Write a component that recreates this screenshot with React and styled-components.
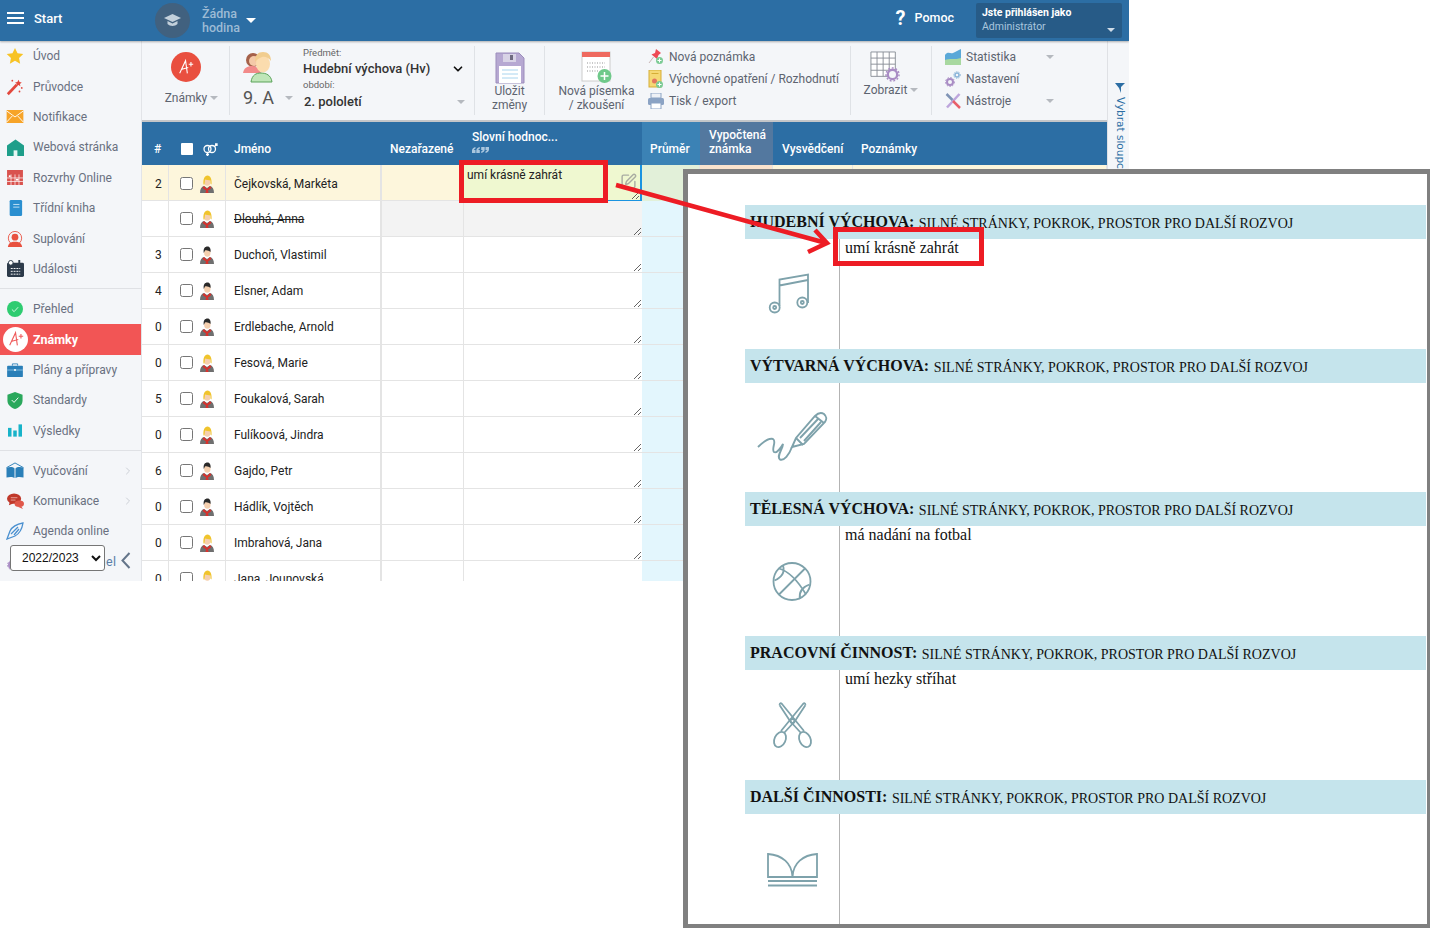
import React from 'react'
import styled, { createGlobalStyle } from 'styled-components'
import { SquarePen, ChevronDown, ChevronRight } from 'lucide-react'

const GlobalStyle = createGlobalStyle`
  html, body { margin: 0; padding: 0; background: #fff; }
  body { font-family: Roboto, "Liberation Sans", Arial, sans-serif; font-size: 12px; color: #222; }
  * { box-sizing: border-box; }
`

const BLUE = '#2c6ea4'

const Page = styled.div`
  position: relative;
  width: 1430px;
  height: 928px;
  overflow: hidden;
`

const Shell = styled.div`
  width: 1129px;
  height: 581px;
  display: flex;
  flex-direction: column;
  overflow: hidden;
`

/* top bar */
const TopBar = styled.header`
  height: 41px;
  flex: none;
  background: ${BLUE};
  display: flex;
  align-items: center;
  color: #fff;
  box-shadow: 0 1px 2px rgba(0, 0, 0, 0.3);
  position: relative;
  z-index: 2;
`

const Burger = styled.div`
  width: 17px;
  height: 12px;
  margin: -5px 0 0 7px;
  border-top: 2px solid #fff;
  border-bottom: 2px solid #fff;
  position: relative;
  &::after {
    content: '';
    position: absolute;
    left: 0;
    right: 0;
    top: 3px;
    height: 2px;
    background: #fff;
  }
`

const StartLabel = styled.span`
  margin: -5px 0 0 10px;
  width: 121px;
  font-size: 13px;
  font-weight: 500;
`

const LessonCircle = styled.div`
  width: 35px;
  height: 35px;
  border-radius: 50%;
  background: #41617f;
  display: flex;
  align-items: center;
  justify-content: center;
`

const LessonText = styled.div`
  margin-left: 12px;
  width: 44px;
  font-size: 12.5px;
  line-height: 14px;
  font-weight: 500;
  color: #9dbbd5;
`

const Caret = styled.i`
  display: inline-block;
  width: 0;
  height: 0;
  border-left: ${p => p.$size || 4}px solid transparent;
  border-right: ${p => p.$size || 4}px solid transparent;
  border-top: ${p => p.$size || 4}px solid ${p => p.$color || '#b5b9bf'};
  flex: none;
`

const HelpMark = styled.span`
  margin: -5px 0 0 auto;
  font-size: 20px;
  font-weight: 700;
`

const HelpLabel = styled.span`
  margin: -7px 0 0 9px;
  font-size: 12.5px;
  font-weight: 500;
`

const UserBox = styled.div`
  margin: 0 7px 0 22px;
  width: 146px;
  height: 35px;
  background: #275b87;
  border-radius: 2px;
  padding: 3px 6px;
  position: relative;
  font-size: 10.5px;
  line-height: 14px;
  span { display: block; }
  b { font-weight: 700; font-size: 10.5px; }
  span + span { color: #a9c6de; }
  ${Caret} { position: absolute; right: 7px; bottom: 6px; }
`

const Body = styled.div`
  flex: 1;
  min-height: 0;
  display: flex;
`

/* sidebar */
const Sidebar = styled.nav`
  width: 142px;
  flex: none;
  background: #f4f6f9;
  border-right: 1px solid #e2e4e8;
  position: relative;
`

const NavItem = styled.div`
  height: ${p => (p.$active ? 31 : 30.4)}px;
  display: flex;
  align-items: center;
  padding-left: ${p => (p.$active ? 3 : 6)}px;
  gap: ${p => (p.$active ? 5 : 9)}px;
  color: ${p => (p.$active ? '#fff' : '#697080')};
  background: ${p => (p.$active ? '#f25555' : 'transparent')};
  font-weight: ${p => (p.$active ? 700 : 400)};
  font-size: ${p => (p.$active ? 12.5 : 12)}px;
  position: relative;
  svg.side { position: absolute; right: 7px; color: #ccd0d6; }
`

const NavIcon = styled.span`
  width: 18px;
  flex: none;
  display: flex;
  justify-content: center;
`

const Divider = styled.div`
  height: 1px;
  background: #dfe1e5;
  margin: 4px 0 4.4px;
`

const ActiveBadge = styled.span`
  width: 25px;
  height: 25px;
  border-radius: 50%;
  background: #fff;
  display: flex;
  align-items: center;
  justify-content: center;
`

const YearSelect = styled.select`
  position: absolute;
  left: 10px;
  top: 504px;
  width: 95px;
  height: 26px;
  font-family: "Liberation Sans", Arial, sans-serif;
  font-size: 12px;
  background: #fff;
  color: #111;
  border: 1px solid #767676;
  border-radius: 3px;
  padding-left: 7px;
`

const Collapse = styled.svg`
  position: absolute;
  left: 121px;
  top: 511px;
`

const PanelLabel = styled.span`
  color: #5a7fa8;
  font-size: 12.5px;
  letter-spacing: 0.4px;
`

/* main */
const Main = styled.main`
  width: 965px;
  flex: none;
  display: flex;
  flex-direction: column;
  min-height: 0;
`

const Toolbar = styled.div`
  height: 81px;
  flex: none;
  background: #f4f6f9;
  border-bottom: 2px solid #c4c6c9;
  display: flex;
  padding: 5px 0;
`

const Group = styled.div`
  width: ${p => p.$w}px;
  flex: none;
  border-right: ${p => (p.$last ? 'none' : '1px solid #dfe2e6')};
  display: flex;
  position: relative;
  color: #5d6470;
  font-size: 12px;
`

const BigAction = styled.div`
  flex: ${p => (p.$fixed ? 'none' : 1)};
  width: ${p => (p.$fixed ? `${p.$fixed}px` : 'auto')};
  display: flex;
  flex-direction: column;
  align-items: center;
  padding-top: ${p => p.$top || 5}px;
  line-height: 14px;
  text-align: center;
  gap: ${p => p.$gap ?? 1}px;
`

const ArtShift = styled.span`
  display: block;
  line-height: 0;
  margin-right: ${p => p.$right}px;
`

const CaretLine = styled.span`
  display: flex;
  align-items: center;
  gap: 3px;
  margin-left: ${p => p.$left || 0}px;
`

const GradeCircle = styled.span`
  width: 30px;
  height: 30px;
  border-radius: 50%;
  background: #e94f3f;
  display: flex;
  align-items: center;
  justify-content: center;
  margin-bottom: 8px;
`

const ClassBlock = styled.div`
  width: 73px;
  padding: 3px 0 0 13px;
  display: flex;
  flex-direction: column;
`

const ClassName = styled.span`
  font-size: 18px;
  line-height: 20px;
  color: #555;
  margin-top: 5px;
  display: flex;
  align-items: center;
  gap: 11px;
`

const SubjectBlock = styled.div`
  width: 164px;
  padding-top: 1px;
  display: flex;
  flex-direction: column;
`

const FieldLabel = styled.span`
  font-size: 9.5px;
  line-height: 12px;
  color: #666;
`

const FieldValue = styled.span`
  font-size: 13px;
  font-weight: 500;
  color: #333;
  line-height: 19px;
  display: flex;
  align-items: center;
  justify-content: space-between;
  padding-right: 2px;
  margin: ${p => (p.$low ? '1px 0 0 1px' : '0 0 1px')};
`

const LinkList = styled.div`
  display: flex;
  flex-direction: column;
  width: ${p => p.$w || 'auto'};
  padding: 0 0 0 ${p => p.$left || 0}px;
`

const LinkRow = styled.div`
  height: 22px;
  display: flex;
  align-items: center;
  gap: 5px;
  ${Caret} { margin-left: auto; margin-right: 5px; }
`

/* table */
const Columns = '27px 57px 156px 82px 178px 58px 73px 80px 1fr'

const Grid = styled.div`
  flex: 1;
  min-height: 0;
  overflow: hidden;
`

const HeadRow = styled.div`
  display: grid;
  grid-template-columns: ${Columns};
  height: 43px;
  background: ${BLUE};
  color: #fff;
  font-weight: 500;
`

const HeadCell = styled.div`
  display: flex;
  align-items: ${p => (p.$stack ? 'flex-start' : 'flex-end')};
  flex-direction: ${p => (p.$stack ? 'column' : 'row')};
  justify-content: ${p => (p.$stack ? 'flex-end' : 'flex-start')};
  gap: ${p => (p.$stack ? 3 : 5)}px;
  padding: 0 0 ${p => p.$bottom || 9}px ${p => p.$pad ?? 8}px;
  background: ${p => p.$bg || 'transparent'};
  line-height: 14px;
`

const HeadBox = styled.input`
  appearance: none;
  margin: 0 0 1px 12px;
  width: 12px;
  height: 12px;
  background: #fff;
  border-radius: 1px;
`

const GenderMark = styled.svg`
  margin-left: 5px;
  flex: none;
`

const StudentRow = styled.div`
  display: grid;
  grid-template-columns: ${Columns};
  height: 36px;
  background: ${p => (p.$current ? '#fdf6dc' : '#fff')};
  border-bottom: 1px solid #e4e4e4;
`

const Cell = styled.div`
  display: flex;
  align-items: center;
  border-right: ${p => p.$border || '1px solid #e4e4e4'};
  padding-left: ${p => p.$pad || 0}px;
  justify-content: ${p => (p.$center ? 'center' : 'flex-start')};
  background: ${p => p.$bg || 'transparent'};
  text-decoration: ${p => (p.$strike ? 'line-through' : 'none')};
  gap: ${p => p.$gap || 0}px;
  position: relative;
  min-width: 0;
`

const RowCheck = styled.input`
  margin: 0 0 0 11px;
  width: 13px;
  height: 13px;
`

const NoteCell = styled(Cell)`
  border-right: none;
  align-items: flex-start;
  z-index: 1;
`

const NoteArea = styled.textarea`
  width: ${p => (p.$current ? 'calc(100% + 2px)' : '100%')};
  height: ${p => (p.$current ? 37 : 35)}px;
  display: block;
  margin: 0;
  padding: 3px;
  font: 12px/14px Roboto, "Liberation Sans", Arial, sans-serif;
  color: #222;
  border: ${p => (p.$current ? '1px solid #1a93e0' : 'none')};
  border-width: ${p => (p.$current ? '0 2px 2px 0' : '0')};
  background: ${p => (p.$current ? '#eff8d0' : p.$empty ? '#f3f3f3' : '#fff')};
  outline: none;
  resize: vertical;
`

const EditIcon = styled.span`
  position: absolute;
  right: 5px;
  top: 8px;
  color: #a9aca2;
  line-height: 0;
`

const Strip = styled.aside`
  flex: 1;
  background: #f4f6f9;
  border-left: 1px solid #dfe1e5;
  padding: 42px 0 0 7px;
  color: ${BLUE};
  font-family: "DejaVu Sans", sans-serif;
  font-size: 10.5px;
  position: relative;
  z-index: 1;
`

const StripText = styled.div`
  writing-mode: vertical-rl;
  white-space: nowrap;
  margin-top: 2px;
`

/* report overlay */
const Report = styled.section`
  position: absolute;
  left: 683px;
  top: 169px;
  width: 747px;
  height: 759px;
  background: #fff;
  border: solid #808080;
  border-width: 5px 3px 4px 5px;
  padding: 31px 1px 0 57px;
  font-family: "Liberation Serif", "Times New Roman", serif;
  display: flex;
  flex-direction: column;
  color: #111;
  z-index: 3;
`

const SectionHead = styled.div`
  height: 34px;
  flex: none;
  background: #c5e4ec;
  padding: 1px 0 0 5px;
  line-height: 33px;
  font-size: 14px;
  white-space: nowrap;
  b { font-size: 16px; margin-right: 1px; position: relative; top: -1px; }
`

const SectionBody = styled.div`
  height: ${p => (p.$fill ? 'auto' : '109.7px')};
  flex: ${p => (p.$fill ? 1 : 'none')};
  display: grid;
  grid-template-columns: 94px 1fr;
`

const IconCell = styled.div`
  display: flex;
  align-items: center;
  justify-content: center;
`

const TextCell = styled.div`
  border-left: 1px solid #b3b3b3;
  padding: 0 0 0 5px;
  font-size: 16px;
  line-height: 18px;
`

const Callouts = styled.svg`
  position: absolute;
  left: 0;
  top: 0;
  z-index: 4;
  pointer-events: none;
`

/* icons */
const Star = () => (
  <svg width="18" height="18" viewBox="0 0 20 20"><path d="M10 1l2.800 5.900 6.400.8-4.700 4.400 1.200 6.400L10 15.400l-5.700 3.100 1.200-6.400L.8 7.700l6.400-.8z" fill="#f7c325" /></svg>
)
const Wand = () => (
  <svg width="18" height="18" viewBox="0 0 20 20"><path d="M2 18L12 7.500" stroke="#e2483d" strokeWidth="3" /><path d="M14 2l1 2.500 2.500.5-2 1.700.5 2.500-2.200-1.300-2.200 1.300.5-2.500-2-1.700 2.500-.5z" fill="#e2483d" /><circle cx="17.500" cy="11" r="1" fill="#e2483d" /><circle cx="7" cy="3" r="1" fill="#e2483d" /><circle cx="15" cy="15" r="1" fill="#e2483d" /></svg>
)
const Mail = () => (
  <svg width="18" height="13" viewBox="0 0 18 14"><rect width="18" height="14" fill="#f7a429" /><path d="M0 1l9 6.500L18 1M0 13l6-6.500M18 13l-6-6.500" stroke="#fff" strokeWidth="1" fill="none" /></svg>
)
const House = () => (
  <svg width="17" height="17" viewBox="0 0 18 18"><path d="M0 7l9-6.500L18 7v11H0z" fill="#1e9e8a" /><path d="M7 18v-6h4v6" fill="#e6f6f3" /></svg>
)
const Timetable = () => (
  <svg width="16" height="15" viewBox="0 0 18 17"><rect width="18" height="17" fill="#d9534f" /><path d="M4.500 5v12M9 5v12M13.500 5v12M0 9h18M0 13h18" stroke="#fff" strokeWidth=".8" /><rect x="2" y="6" width="2" height="2" fill="#fff" /><rect x="10" y="10" width="3" height="2" fill="#fff" /></svg>
)
const Notebook = () => (
  <svg width="16" height="16" viewBox="0 0 18 18"><rect x="3" y="0" width="14" height="18" rx="1.500" fill="#2a8fd0" /><path d="M7 5h7M7 8h7" stroke="#cfe9f8" /></svg>
)
const Substitute = () => (
  <svg width="16" height="16" viewBox="0 0 18 18"><circle cx="9" cy="8" r="7.500" fill="none" stroke="#e8503f" /><circle cx="9" cy="7" r="3.800" fill="#e8503f" /><path d="M1 18c.5-4 3-6 8-6s7.500 2 8 6z" fill="#e8503f" /></svg>
)
const CalendarDark = () => (
  <svg width="17" height="17" viewBox="0 0 18 18"><rect x="0" y="3" width="18" height="15" rx="1.500" fill="#2c3a4a" /><path d="M4 9h10M4 12h10M4 15h10" stroke="#fff" strokeDasharray="2 1" /><circle cx="4" cy="3" r="2.500" fill="#fff" stroke="#2c3a4a" /><path d="M13 0v4" stroke="#2c3a4a" strokeWidth="2" /></svg>
)
const CheckRound = () => (
  <svg width="16" height="16" viewBox="0 0 18 18"><circle cx="9" cy="9" r="9" fill="#2ecc71" /><path d="M5.500 9.500l2.500 2.500 4.500-5" stroke="#e6fbef" fill="none" /></svg>
)
const GradeMark = ({ color }) => (
  <svg width="18" height="18" viewBox="0 0 20 20" fill="none" stroke={color} strokeWidth="1.200"><path d="M3 17L9.500 3l2 14M5.500 12.500l7-2" /><path d="M15.500 4.500v5M13 7h5" /></svg>
)
const Briefcase = () => (
  <svg width="16" height="14" viewBox="0 0 18 16"><path d="M6 3V1h6v2" fill="none" stroke="#2a7fb8" /><rect y="3" width="18" height="13" rx="1" fill="#2a7fb8" /><path d="M0 8h18" stroke="#8cc3e6" /><rect x="8" y="7" width="2" height="2" fill="#fff" /></svg>
)
const Shield = () => (
  <svg width="16" height="17" viewBox="0 0 16 18"><path d="M8 0l8 3v6c0 4.500-3.500 7.500-8 9-4.500-1.500-8-4.500-8-9V3z" fill="#2aa85c" /><path d="M4.500 8.500l2.500 2.500 4.500-5" stroke="#fff" fill="none" /></svg>
)
const Bars = () => (
  <svg width="14" height="13" viewBox="0 0 16 14"><rect y="4" width="4" height="10" fill="#17b3c9" /><rect x="6" y="7" width="4" height="7" fill="#17b3c9" /><rect x="12" width="4" height="14" fill="#17b3c9" /></svg>
)
const BookBlue = () => (
  <svg width="18" height="17" viewBox="0 0 18 18"><path d="M0 6l9-5 9 5" stroke="#2a7fb8" fill="none" /><path d="M0 6c3-1 7-1 8.500 1v10C7 15.500 3 15.500 0 16.500zM18 6c-3-1-7-1-8.500 1v10c1.500-1.500 5.500-1.500 8.500-.5z" fill="#2a7fb8" /></svg>
)
const Chat = () => (
  <svg width="17" height="16" viewBox="0 0 18 17"><ellipse cx="7.500" cy="6" rx="7.500" ry="5.500" fill="#c0392b" /><path d="M3 9l-1 4 5-2z" fill="#c0392b" /><path d="M4 5h7M4 7.500h5" stroke="#e8a49c" /><ellipse cx="13" cy="11.500" rx="5" ry="3.500" fill="#e0574a" /><path d="M15 14l2 3-5-2z" fill="#e0574a" /></svg>
)
const Feather = () => (
  <svg width="18" height="18" viewBox="0 0 18 18" fill="none" stroke="#4a90d0" strokeWidth="1.300"><path d="M1 17L4 9c2-4 7-7 13-8-1 6-4 11-8 13z" /><path d="M5 12l7-7M8 13l5-6" /></svg>
)
const Hat = ({ color = '#c3d0db' }) => (
  <svg width="17" height="15" viewBox="0 0 17 15"><path d="M8.500 1L17 5l-8.500 4L0 5z" fill={color} /><path d="M3.500 8v3c2.500 2.500 7.500 2.500 10 0V8l-5 2.500z" fill={color} /></svg>
)
const Quotes = () => (
  <svg width="17" height="6" viewBox="0 0 17 6" fill="#a9c6de"><path d="M0 3.500C0 1.500 1.500.5 3.500 0v1.500C2.500 2 2 2.500 2 3h1.500v3H0zM4.300 3.500C4.300 1.500 5.800.5 7.800 0v1.500C6.800 2 6.300 2.500 6.300 3h1.500v3H4.300zM9.200 0h3.500v2.500c0 2-1.500 3-3.500 3.500V4.500c1-.5 1.500-1 1.500-1.500H9.200zM13.500 0H17v2.500c0 2-1.500 3-3.500 3.500V4.500c1-.5 1.500-1 1.500-1.500h-1.500z" /></svg>
)
const Avatar = ({ female }) => (
  <svg width="14" height="18" viewBox="0 0 14 18">
    <path d="M0 18c0-4 1.500-6.500 4-7l3 2 3-2c2.500.5 4 3 4 7z" fill="#6f6f6f" />
    <ellipse cx="7.300" cy="6.500" rx="3.200" ry="4.300" fill="#f5cfae" />
    <path d="M4 11l3 3 3-3 1.500 2L8 15.500l.5 2.500h-3l.5-2.500L2.500 13z" fill="#d8322d" />
    {female
      ? <path d="M3.500 9.500C3 4 4.500.5 7.500.5S12 4 11.500 9.500l-1-1V5.500C9 5 6 5 5 4.500L4.500 9.500z" fill="#f0c42c" />
      : <path d="M3.800 7C3 2.500 5 .5 7.500.5S11 3 10.500 6C9 5 7 4 5 4.500z" fill="#2a2a2a" />}
  </svg>
)
const Parents = () => (
  <svg width="36" height="34" viewBox="0 0 36 34">
    <circle cx="10" cy="11" r="7" fill="#a5614a" />
    <path d="M0 24c1-5 4-7 9-7s8 3 9 7z" fill="#f28a8a" />
    <circle cx="11" cy="12" r="5" fill="#f4c9a8" />
    <path d="M8 33c1-7 5-9 10-9s10 2 11 9z" fill="#bfe6b8" stroke="#5aa35a" />
    <ellipse cx="20" cy="15" rx="7" ry="8.500" fill="#fbdcae" />
    <path d="M12 13c0-7 3-10 8-10s8 3 8 9c-2-3-6-5-9-4-2 1-5 2-7 5z" fill="#f1cd8f" />
  </svg>
)
const SaveDisk = () => (
  <svg width="30" height="32" viewBox="0 0 30 32">
    <path d="M1 1h23l5 5v25H1z" fill="#b6a8d2" stroke="#9c8dbc" />
    <rect x="8" y="2" width="13" height="8" fill="#d8d3e6" /><rect x="15" y="3" width="3" height="5" fill="#6f6a80" />
    <rect x="4" y="14" width="22" height="17" fill="#fff" />
    <path d="M7 18h16M7 22h16M7 26h16" stroke="#a9d4ee" />
  </svg>
)
const ExamPage = () => (
  <svg width="32" height="33" viewBox="0 0 32 33">
    <rect x="1" y="1" width="28" height="29" fill="#fff" stroke="#ccc" />
    <rect x="1" y="1" width="28" height="5" fill="#ef6a5f" />
    <path d="M6 12h18M6 16h18M6 20h12" stroke="#c9c9c9" strokeDasharray="1 1.500" strokeWidth="2" />
    <circle cx="23.500" cy="25" r="7" fill="#6fc98a" />
    <path d="M23.500 21v8M19.500 25h8" stroke="#fff" strokeWidth="1.500" />
  </svg>
)
const Pin = () => (
  <svg width="16" height="18" viewBox="0 0 16 18"><path d="M8 1l5 4-2.500 2L9 11 3.500 6.500 7 5z" fill="#ee4a55" /><path d="M5.500 9L1 15" stroke="#c9b7b7" /><circle cx="11.500" cy="12.500" r="3.500" fill="#7ccb95" /><path d="M11.500 10.500v4M9.500 12.500h4" stroke="#fff" /></svg>
)
const Measure = () => (
  <svg width="16" height="19" viewBox="0 0 16 19"><rect x="1" y="0" width="12" height="17" fill="#f5d874" stroke="#d6ad36" /><path d="M3.500 3.500h7" stroke="#d6ad36" /><circle cx="6.500" cy="11" r="2.500" fill="#e2755f" /><circle cx="11.500" cy="14.500" r="3.500" fill="#7ccb95" /><path d="M11.500 12.500v4M9.500 14.500h4" stroke="#fff" /></svg>
)
const Printer = () => (
  <svg width="16" height="16" viewBox="0 0 16 16"><rect x="3" y="0" width="10" height="5" fill="#eef1f6" stroke="#8ba3c4" /><rect y="5" width="16" height="7" rx="1.500" fill="#8ba3c4" /><rect x="3" y="10" width="10" height="6" fill="#fff" stroke="#8ba3c4" /></svg>
)
const GridGear = () => (
  <svg width="30" height="31" viewBox="0 0 32 33">
    <path d="M1 1h26v26H1zM1 7.500h26M1 14h26M1 20.500h26M7.500 1v26M14 1v26M20.500 1v26" fill="#fff" stroke="#8a8f98" />
    <circle cx="24" cy="25" r="5" fill="#f4f6f9" stroke="#a98cc4" strokeWidth="2.500" />
    <circle cx="24" cy="25" r="7" fill="none" stroke="#a98cc4" strokeWidth="1.500" strokeDasharray="2 2" />
  </svg>
)
const AreaChart = () => (
  <svg width="16" height="16" viewBox="0 0 16 16"><path d="M0 16V6c3-4 5-1 8-2s5-3 8-4v16z" fill="#5aa8d8" /><path d="M0 16v-5c4-2 10 0 16-2v7z" fill="#a8d8a0" /></svg>
)
const Gears = () => (
  <svg width="16" height="16" viewBox="0 0 16 16" fill="none"><circle cx="5" cy="11" r="3" stroke="#a98cc4" strokeWidth="2" /><circle cx="5" cy="11" r="4.500" stroke="#a98cc4" strokeDasharray="1.500 1.500" /><circle cx="12" cy="4" r="2" stroke="#8ab4d8" strokeWidth="1.500" /><circle cx="12" cy="4" r="3.300" stroke="#8ab4d8" strokeDasharray="1.200 1.200" /></svg>
)
const Tools = () => (
  <svg width="16" height="16" viewBox="0 0 16 16" strokeWidth="2.500" fill="none"><path d="M14.500 1L2 14.500" stroke="#bda5dc" /><path d="M1.500 1l6 6" stroke="#7f93b5" /><path d="M8 8l7 7" stroke="#e8606a" /></svg>
)

const sk = { width: 55, fill: 'none', stroke: '#7ea2ab', strokeWidth: 1.800 }

const MusicArt = () => (
  <svg height="55" viewBox="0 0 55 55" {...sk}>
    <path d="M14.500 40V13.500L43 8.500V37M14.500 19.500L43 14" />
    <circle cx="9.700" cy="41.500" r="5" /><circle cx="9.700" cy="41.500" r="1.500" />
    <circle cx="37.300" cy="36.500" r="5" /><circle cx="37.300" cy="36.500" r="1.500" />
  </svg>
)
const PencilArt = () => (
  <svg width="85" height="65" viewBox="0 0 85 65" fill="none" stroke="#7ea2ab" strokeWidth="1.900">
    <path d="M8 42C13 37 19 33 23 34C27 36 21 44 24 47C27 49 32 41 33 39C33 44 26 51 30 54.500C34 56 39 50 42 42" />
    <path d="M42 42L46 33L65 11C68 8 71 7 74 9C77 12 77 14 75 17L54 39Z" />
    <path d="M46 33L53 40M50 33L68 14M54 36L71 17M65 11L74 18" />
  </svg>
)
const BallArt = () => (
  <svg height="55" viewBox="0 0 55 52" {...sk}>
    <circle cx="27" cy="26" r="18.500" />
    <path d="M18 10Q21 20 9.500 25M44.500 29Q33 33 35 43.500M14 13Q28 17 41 39M40 13L14 39" />
  </svg>
)
const ScissorsArt = () => (
  <svg height="55" viewBox="0 0 55 55" {...sk}>
    <path d="M14.500 8Q15 5 17 7L39 34M14.500 8L25 24L36 36" />
    <path d="M40.500 8Q40 5 38 7L16 34M40.500 8L30 24L19 36" />
    <ellipse cx="40" cy="42.500" rx="5.500" ry="8" transform="rotate(-25 40 42.500)" />
    <ellipse cx="15" cy="42.500" rx="5.500" ry="8" transform="rotate(25 15 42.500)" />
    <circle cx="27.500" cy="24" r="2" />
  </svg>
)
const BookArt = () => (
  <svg height="55" viewBox="0 0 55 55" {...sk}>
    <path d="M3 13V36H52V13C38 14 28 22 27.500 36C27 22 17 14 3 13Z" />
    <path d="M3 40H52M3 44.500H52" strokeWidth="2" />
  </svg>
)

const menuTop = [
  [Star, 'Úvod'], [Wand, 'Průvodce'], [Mail, 'Notifikace'], [House, 'Webová stránka'],
  [Timetable, 'Rozvrhy Online'], [Notebook, 'Třídní kniha'], [Substitute, 'Suplování'], [CalendarDark, 'Události'],
]
const menuBottom = [[Briefcase, 'Plány a přípravy'], [Shield, 'Standardy'], [Bars, 'Výsledky']]

const students = [
  ['2', 'Čejkovská, Markéta', true],
  ['', 'Dlouhá, Anna', true],
  ['3', 'Duchoň, Vlastimil', false],
  ['4', 'Elsner, Adam', false],
  ['0', 'Erdlebache, Arnold', false],
  ['0', 'Fesová, Marie', true],
  ['5', 'Foukalová, Sarah', true],
  ['0', 'Fulíkoová, Jindra', true],
  ['6', 'Gajdo, Petr', false],
  ['0', 'Hádlík, Vojtěch', false],
  ['0', 'Imbrahová, Jana', true],
  ['0', 'Jana, Jounovská', true],
]

const sections = [
  ['HUDEBNÍ VÝCHOVA:', 'umí krásně zahrát', MusicArt],
  ['VÝTVARNÁ VÝCHOVA:', '', PencilArt],
  ['TĚLESNÁ VÝCHOVA:', 'má nadání na fotbal', BallArt],
  ['PRACOVNÍ ČINNOST:', 'umí hezky stříhat', ScissorsArt],
  ['DALŠÍ ČINNOSTI:', '', BookArt],
]

const NavRow = ({ icon: Icon, label, more }) => (
  <NavItem>
    <NavIcon><Icon /></NavIcon>
    <span>{label}</span>
    {more && <ChevronRight className="side" size={12} />}
  </NavItem>
)

const App = () => (
  <Page>
    <GlobalStyle />
    <Shell>
      <TopBar>
        <Burger />
        <StartLabel>Start</StartLabel>
        <LessonCircle><Hat /></LessonCircle>
        <LessonText>Žádna hodina</LessonText>
        <Caret $size={5} $color="#fff" />
        <HelpMark>?</HelpMark>
        <HelpLabel>Pomoc</HelpLabel>
        <UserBox>
          <span><b>Jste přihlášen jako</b></span>
          <span>Administrátor</span>
          <Caret $color="#cfdce8" />
        </UserBox>
      </TopBar>
      <Body>
        <Sidebar>
          {menuTop.map(([icon, label]) => <NavRow key={label} icon={icon} label={label} />)}
          <Divider />
          <NavRow icon={CheckRound} label="Přehled" />
          <NavItem $active>
            <ActiveBadge><GradeMark color="#ef5a5a" /></ActiveBadge>
            <span>Známky</span>
          </NavItem>
          {menuBottom.map(([icon, label]) => <NavRow key={label} icon={icon} label={label} />)}
          <Divider />
          <NavRow icon={BookBlue} label="Vyučování" more />
          <NavRow icon={Chat} label="Komunikace" more />
          <NavRow icon={Feather} label="Agenda online" />
          <NavItem><NavIcon><Gears /></NavIcon><PanelLabel>Schovat panel</PanelLabel></NavItem>
          <YearSelect defaultValue="2022/2023"><option>2022/2023</option></YearSelect>
          <Collapse width="10" height="17" viewBox="0 0 10 17" fill="none" stroke="#64758a" strokeWidth="2"><path d="M8.500 1L1.500 8.500l7 7.500" /></Collapse>
        </Sidebar>
        <Main>
          <Toolbar>
            <Group $w={88}>
              <BigAction $top={6}>
                <GradeCircle><GradeMark color="#fff" /></GradeCircle>
                <CaretLine $left={12}>Známky <Caret /></CaretLine>
              </BigAction>
            </Group>
            <Group $w={245}>
              <ClassBlock>
                <Parents />
                <ClassName>9. A <Caret /></ClassName>
              </ClassBlock>
              <SubjectBlock>
                <FieldLabel>Předmět:</FieldLabel>
                <FieldValue>Hudební výchova (Hv) <ChevronDown size={14} color="#111" strokeWidth={3} /></FieldValue>
                <FieldLabel>období:</FieldLabel>
                <FieldValue $low>2. pololetí <Caret /></FieldValue>
              </SubjectBlock>
            </Group>
            <Group $w={70}>
              <BigAction $top={6} $gap={0}>
                <SaveDisk />
                <span>Uložit<br />změny</span>
              </BigAction>
            </Group>
            <Group $w={306}>
              <BigAction $fixed={103} $top={5} $gap={0}>
                <ExamPage />
                <span>Nová písemka<br />/ zkoušení</span>
              </BigAction>
              <LinkList>
                <LinkRow><Pin /> Nová poznámka</LinkRow>
                <LinkRow><Measure /> Výchovné opatření / Rozhodnutí</LinkRow>
                <LinkRow><Printer /> Tisk / export</LinkRow>
              </LinkList>
            </Group>
            <Group $w={81}>
              <BigAction $top={5}>
                <ArtShift $right={12}><GridGear /></ArtShift>
                <CaretLine>Zobrazit <Caret /></CaretLine>
              </BigAction>
            </Group>
            <Group $w={175} $last>
              <LinkList $left={13} $w="127px">
                <LinkRow><AreaChart /> Statistika <Caret /></LinkRow>
                <LinkRow><Gears /> Nastavení</LinkRow>
                <LinkRow><Tools /> Nástroje <Caret /></LinkRow>
              </LinkList>
            </Group>
          </Toolbar>
          <Grid>
            <HeadRow>
              <HeadCell $pad={12}>#</HeadCell>
              <HeadCell $pad={0}>
                <HeadBox type="checkbox" />
                <GenderMark width="15" height="13" viewBox="0 0 15 13" fill="none" stroke="#fff" strokeWidth="1.300"><circle cx="4.500" cy="6" r="3.500" /><circle cx="9" cy="6" r="3.500" /><path d="M4.500 9.500V13M3 11.500h3M11.500 3.500L14 1M12 1h2v2" /></GenderMark>
              </HeadCell>
              <HeadCell>Jméno</HeadCell>
              <HeadCell>Nezařazené</HeadCell>
              <HeadCell $stack $bottom={12}>Slovní hodnoc...<Quotes /></HeadCell>
              <HeadCell $bg="#3b82b5">Průměr</HeadCell>
              <HeadCell $bg="#53789f" $pad={9} $bottom={9}>Vypočtená<br />známka</HeadCell>
              <HeadCell $pad={9}>Vysvědčení</HeadCell>
              <HeadCell>Poznámky</HeadCell>
            </HeadRow>
            {students.map(([no, name, female], i) => {
              const current = i === 0
              const removed = i === 1
              return (
                <StudentRow key={name} $current={current}>
                  <Cell $pad={13}>{no}</Cell>
                  <Cell $gap={7}><RowCheck type="checkbox" /><Avatar female={female} /></Cell>
                  <Cell $pad={8} $strike={removed} $border="2px solid #e4e4e4">{name}</Cell>
                  <Cell $bg={removed ? '#f3f3f3' : undefined} />
                  <NoteCell>
                    <NoteArea readOnly $current={current} $empty={removed} defaultValue={current ? 'umí krásně zahrát' : ''} />
                    {current && <EditIcon><SquarePen size={17} /></EditIcon>}
                  </NoteCell>
                  <Cell $bg={current ? '#e2f0d9' : '#e3f6fd'} />
                  <Cell $bg={current ? '#fbe3cd' : '#fff'} />
                  <Cell />
                  <Cell />
                </StudentRow>
              )
            })}
          </Grid>
        </Main>
        <Strip>
          <svg width="10" height="10" viewBox="0 0 10 10"><path d="M0 0h10L6 4v6L4 5z" fill={BLUE} /></svg>
          <StripText>Vybrat sloupce</StripText>
        </Strip>
      </Body>
    </Shell>

    <Report>
      {sections.map(([title, text, Art], i) => (
        <React.Fragment key={title}>
          <SectionHead><b>{title}</b> SILNÉ STRÁNKY, POKROK, PROSTOR PRO DALŠÍ ROZVOJ</SectionHead>
          <SectionBody $fill={i === sections.length - 1}>
            <IconCell><Art /></IconCell>
            <TextCell>{text}</TextCell>
          </SectionBody>
        </React.Fragment>
      ))}
    </Report>

    <Callouts width="1430" height="928" viewBox="0 0 1430 928">
      <rect x="461.500" y="162.500" width="144" height="38" fill="none" stroke="#ed1c24" strokeWidth="5" />
      <rect x="835.500" y="229.500" width="146" height="34" fill="none" stroke="#ed1c24" strokeWidth="5" />
      <path d="M616 185L826 243M815 230l12 13-19 9" fill="none" stroke="#ed1c24" strokeWidth="4.500" />
    </Callouts>
  </Page>
)

export default App
